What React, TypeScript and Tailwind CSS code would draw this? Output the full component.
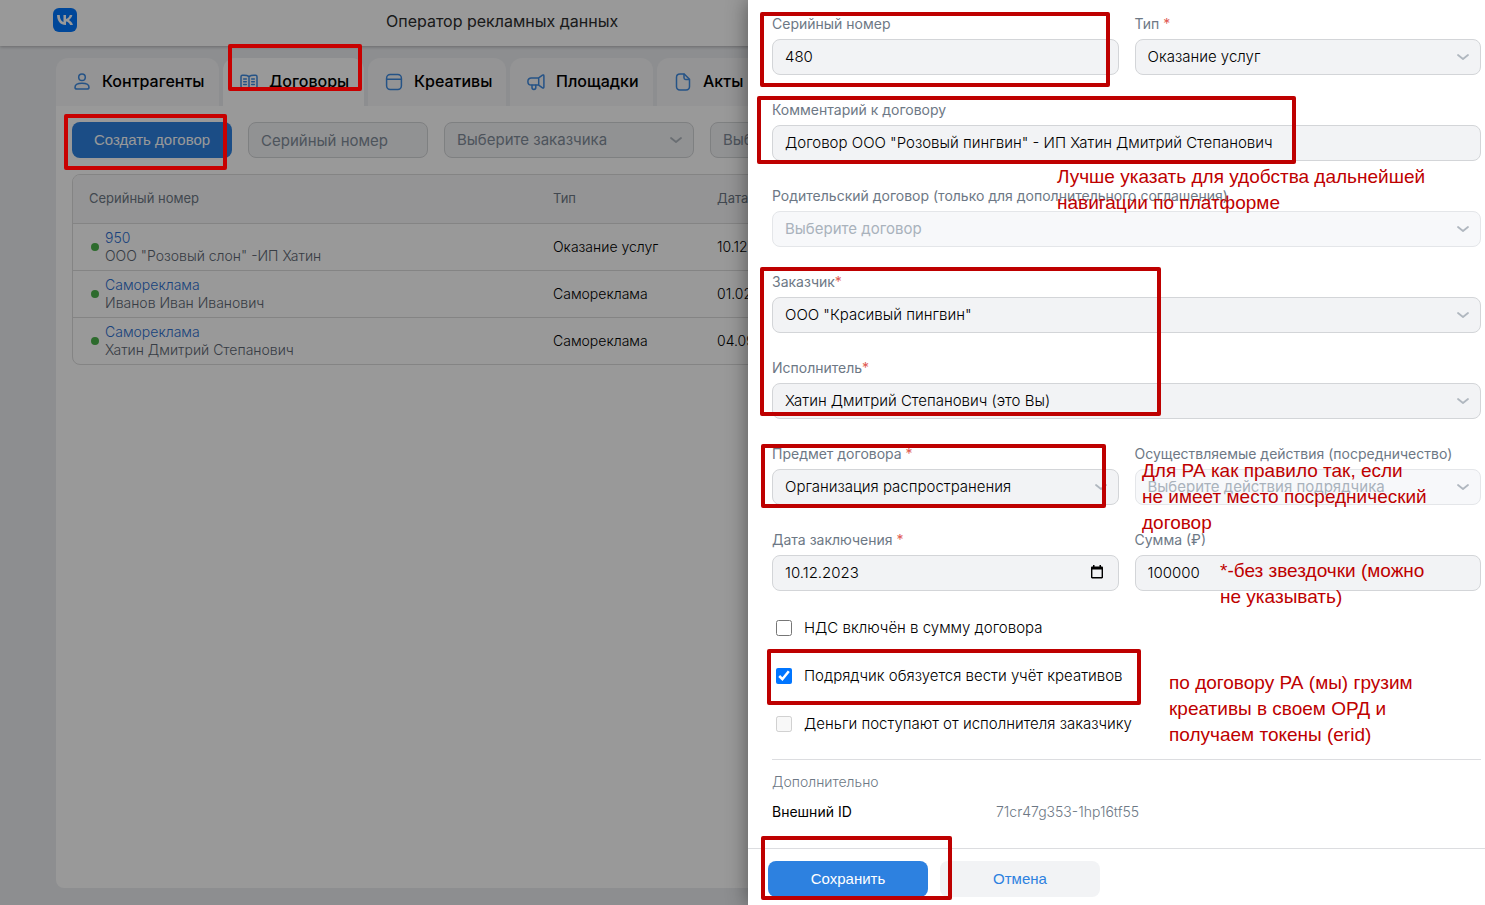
import { useId, useState } from 'react';
import type { ReactNode } from 'react';
import clsx from 'clsx';

type Tab = { label: string; icon: ReactNode; width: string; active?: boolean };
type Contract = { name: string; note: string; type: string; date: string };

const strokeProps = {
  viewBox: '0 0 20 20',
  fill: 'none',
  stroke: 'currentColor',
  strokeWidth: 1.5,
  strokeLinecap: 'round' as const,
  strokeLinejoin: 'round' as const,
  className: 'h-5 w-5 shrink-0 text-[#3f8ae0]',
  'aria-hidden': true,
};

const UserIcon = () => (
  <svg {...strokeProps}>
    <circle cx="10" cy="5.2" r="3.3" />
    <path d="M10 11.2c-4 0-7 1.6-7 4 0 1.2.7 1.9 1.9 1.9h10.2c1.2 0 1.9-.7 1.9-1.9 0-2.4-3-4-7-4Z" />
  </svg>
);

const BookIcon = () => (
  <svg {...strokeProps}>
    <path d="M10 4.6C8.8 3.7 7.3 3.3 5 3.3H3.4c-.9 0-1.4.5-1.4 1.4v9.8c0 .9.5 1.3 1.4 1.3H6c1.8 0 3 .4 4 1.3 1-.9 2.2-1.3 4-1.3h2.6c.9 0 1.4-.4 1.4-1.3V4.7c0-.9-.5-1.4-1.4-1.4H15c-2.3 0-3.8.4-5 1.3Zm0 0v12.2" />
    <path d="M4.7 6.9h2.6M4.7 9.7h2.6M4.7 12.5h2.6M12.7 6.9h2.6M12.7 9.7h2.6M12.7 12.5h2.6" />
  </svg>
);

const WindowIcon = () => (
  <svg {...strokeProps}>
    <rect x="2.6" y="2.6" width="14.8" height="14.8" rx="3.6" />
    <path d="M2.6 7.3h14.8" />
  </svg>
);

const MegaphoneIcon = () => (
  <svg {...strokeProps}>
    <path d="M12.7 5.9 16.5 3.2c.7-.5 1.4-.2 1.4.7v11.2c0 .9-.7 1.2-1.4.7l-3.8-2.7H5.2A3.3 3.3 0 0 1 1.9 9.8v-.6a3.3 3.3 0 0 1 3.3-3.3h7.5Zm0 0v7.2" />
    <path d="M6 13.2v2.4c0 1.2.8 1.9 1.9 1.9s1.9-.7 1.9-1.9v-2.4" />
  </svg>
);

const FileIcon = () => (
  <svg {...strokeProps}>
    <path d="M11.2 2H7C4.7 2 3.5 3.2 3.5 5.4v9.2C3.5 16.8 4.7 18 7 18h6c2.3 0 3.5-1.2 3.5-3.4V7.3L11.2 2Z" />
    <path d="M11 2.2v3.6c0 1 .6 1.6 1.6 1.6h3.7" />
  </svg>
);

const tabs: Tab[] = [
  { label: 'Контрагенты', icon: <UserIcon />, width: 'w-[163px]' },
  { label: 'Договоры', icon: <BookIcon />, width: 'w-[141px]', active: true },
  { label: 'Креативы', icon: <WindowIcon />, width: 'w-[138px]' },
  { label: 'Площадки', icon: <MegaphoneIcon />, width: 'w-[143px]' },
  { label: 'Акты', icon: <FileIcon />, width: 'w-[104px]' },
];

const contracts: Contract[] = [
  { name: '950', note: 'ООО "Розовый слон" -ИП Хатин', type: 'Оказание услуг', date: '10.12.2023' },
  { name: 'Самореклама', note: 'Иванов Иван Иванович', type: 'Самореклама', date: '01.02.2023' },
  { name: 'Самореклама', note: 'Хатин Дмитрий Степанович', type: 'Самореклама', date: '04.09.2023' },
];

const controlClass =
  'h-9 w-full appearance-none rounded-lg border px-3 text-[15px] outline-none placeholder:text-[#818c99]';
const enabledClass = 'border-[#d3d5d8] bg-[#f2f3f5]';
const disabledClass = 'border-[#e4e6e9] bg-[#f7f8fa] text-[#a9b2bc] opacity-100';

function Chevron() {
  return (
    <svg
      viewBox="0 0 14 8"
      fill="none"
      stroke="#b0b7bf"
      strokeWidth="1.8"
      strokeLinecap="round"
      strokeLinejoin="round"
      className="pointer-events-none absolute top-[14px] right-[11px] h-2 w-3.5"
      aria-hidden
    >
      <path d="M2 2l5 4L12 2" />
    </svg>
  );
}

type SelectProps = { id?: string; value: string; label?: string; placeholder?: boolean; disabled?: boolean };

function Select({ id, value, label, placeholder, disabled }: SelectProps) {
  return (
    <div className="relative">
      <select
        id={id}
        aria-label={label}
        disabled={disabled}
        className={clsx(
          controlClass,
          disabled ? disabledClass : enabledClass,
          !disabled && (placeholder ? 'text-[#818c99]' : 'font-light text-black'),
        )}
      >
        <option>{value}</option>
      </select>
      <Chevron />
    </div>
  );
}

type FieldProps = {
  label: string;
  mark?: string;
  value: string;
  kind?: 'text' | 'select' | 'date';
  wide?: boolean;
  disabled?: boolean;
};

function Field({ label, mark, value, kind = 'text', wide, disabled }: FieldProps) {
  const id = useId();
  const [text, setText] = useState(value);

  return (
    <div className={clsx('flex flex-col gap-[5px]', wide && 'col-span-2')}>
      <label htmlFor={id} className="text-sm leading-5 whitespace-nowrap text-[#6d7885]">
        {label}
        {mark && <span className="text-[#e05a52]">{mark}</span>}
      </label>
      {kind === 'select' ? (
        <Select id={id} value={value} disabled={disabled} />
      ) : (
        <div className="relative">
          <input
            id={id}
            value={text}
            onChange={(e) => setText(e.target.value)}
            className={clsx(controlClass, enabledClass, 'pb-0.5 font-light text-black')}
          />
          {kind === 'date' && (
            <button type="button" aria-label="Открыть календарь" className="absolute top-[10px] right-[15px]">
              <svg viewBox="0 0 14 14" className="h-3.5 w-3.5" aria-hidden>
                <path
                  fillRule="evenodd"
                  d="M3 0h1.5v1.5h5V0H11v1.5h.8c.7 0 1.2.5 1.2 1.2v9.6c0 .7-.5 1.2-1.2 1.2H2.2c-.7 0-1.2-.5-1.2-1.2V2.7c0-.7.5-1.2 1.2-1.2H3V0ZM2.4 4.5v7.6h9.2V4.5H2.4Z"
                />
              </svg>
            </button>
          )}
        </div>
      )}
    </div>
  );
}

function CheckRow({ label, checked: initial = false, disabled }: { label: string; checked?: boolean; disabled?: boolean }) {
  const [checked, setChecked] = useState(initial);
  return (
    <label className="flex h-12 items-center gap-3 pl-1 text-[15px] font-light">
      <input
        type="checkbox"
        checked={checked}
        disabled={disabled}
        onChange={(e) => setChecked(e.target.checked)}
        className="h-4 w-4 accent-[#0075ff]"
      />
      {label}
    </label>
  );
}

// Red frames and remarks of the walkthrough, drawn over the live page
function Frame({ className }: { className: string }) {
  return <div className={clsx('pointer-events-none absolute rounded-xs border-4', className)} />;
}

function Remark({ lines, className }: { lines: string[]; className: string }) {
  return (
    <p className={clsx("pointer-events-none absolute font-['Liberation_Sans',sans-serif] text-[19px] leading-[26px] whitespace-nowrap text-[#be0000]", className)}>
      {lines.map((line) => (
        <span key={line} className="block">{line}</span>
      ))}
    </p>
  );
}

function ContractsPage() {
  return (
    <div className="flex min-h-screen flex-col bg-[#ebedf0]">
      <header className="flex h-[46px] shrink-0 items-center bg-white pl-[53px] shadow-[0_1px_3px_rgba(0,0,0,0.25)]">
        <a href="#" aria-label="VK" className="mb-1.5 flex h-6 w-6 items-center justify-center rounded-md bg-[#0077ff]">
          <svg viewBox="4 7.3 16.1 10" className="w-4 fill-white" aria-hidden>
            <path d="M6.79 7.3H4.05c.13 6.24 3.25 9.99 8.72 9.99h.31v-3.57c2.01.2 3.53 1.67 4.14 3.57h2.84c-.78-2.84-2.83-4.41-4.11-5.01 1.28-.74 3.08-2.54 3.51-4.98h-2.58c-.56 1.98-2.22 3.78-3.8 3.95V7.3H10.5v6.92c-1.6-.4-3.62-2.34-3.71-6.92Z" />
          </svg>
        </a>
        <h1 className="mb-1 ml-[309px] text-base text-[#2c2d2e]">Оператор рекламных данных</h1>
      </header>

      <main className="mx-14 mt-3 mb-[17px] flex grow flex-col">
        <nav className="flex gap-1">
          {tabs.map(({ label, icon, width, active }) => (
            <a
              key={label}
              href="#"
              className={clsx('flex h-12 items-center gap-2.5 rounded-t-xl pl-4 font-medium text-black', width, active ? 'bg-white' : 'bg-[#f7f7f8]')}
            >
              {icon}
              <span className="pb-0.5">{label}</span>
            </a>
          ))}
        </nav>

        <section className="flex grow flex-col gap-4 rounded-b-lg bg-white p-4">
          <div className="flex gap-4">
            <button type="button" className="h-9 w-40 shrink-0 rounded-lg bg-[#2d81e0] font-['Liberation_Sans',sans-serif] text-[15px] text-white">
              Создать договор
            </button>
            <div className="w-[180px] shrink-0">
              <input aria-label="Серийный номер" placeholder="Серийный номер" className={clsx(controlClass, enabledClass)} />
            </div>
            <div className="w-[250px] shrink-0">
              <Select label="Заказчик" value="Выберите заказчика" placeholder />
            </div>
            <div className="w-[250px] shrink-0">
              <Select label="Исполнитель" value="Выберите исполнителя" placeholder />
            </div>
          </div>

          <div className="overflow-hidden rounded-lg border border-[#dcdcdd]">
            <table className="w-full table-fixed text-left text-sm">
              <thead className="bg-[#f7f7f8] text-[13px] text-[#6d7885]">
                <tr className="h-12">
                  <th className="w-[464px] pl-4 font-normal">Серийный номер</th>
                  <th className="w-[164px] pl-4 font-normal">Тип</th>
                  <th className="pl-4 font-normal">Дата</th>
                </tr>
              </thead>
              <tbody className="font-light">
                {contracts.map((c) => (
                  <tr key={c.note} className="h-[47px] border-t border-[#dcdcdd]">
                    <td className="pl-[18px]">
                      <div className="flex items-center gap-1.5">
                        <span className="h-2 w-2 rounded-full bg-[#4bb34b]" />
                        <div className="leading-[18px]">
                          <a href="#" className="block text-[#2d6fd0]">{c.name}</a>
                          <span className="block text-[#5c6672]">{c.note}</span>
                        </div>
                      </div>
                    </td>
                    <td className="pl-4">{c.type}</td>
                    <td className="pl-4">{c.date}</td>
                  </tr>
                ))}
              </tbody>
            </table>
          </div>
        </section>
      </main>
    </div>
  );
}

function ContractDrawer() {
  return (
    <aside className="absolute inset-y-0 right-0 flex w-[737px] flex-col bg-white shadow-[0_0_20px_rgba(0,0,0,0.45)]">
      <div className="grow overflow-hidden pt-[14px] pr-1 pl-6">
        <div className="grid grid-cols-2 gap-x-4 gap-y-[25px]">
          <Field label="Серийный номер" value="480" />
          <Field label="Тип" mark=" *" value="Оказание услуг" kind="select" />
          <Field label="Комментарий к договору" value={'Договор ООО "Розовый пингвин" - ИП Хатин Дмитрий Степанович'} wide />
          <Field label="Родительский договор (только для дополнительного соглашения)" value="Выберите договор" kind="select" wide disabled />
          <Field label="Заказчик" mark="*" value={'ООО "Красивый пингвин"'} kind="select" wide />
          <Field label="Исполнитель" mark="*" value="Хатин Дмитрий Степанович (это Вы)" kind="select" wide />
          <Field label="Предмет договора" mark=" *" value="Организация распространения" kind="select" />
          <Field label="Осуществляемые действия (посредничество)" value="Выберите действия подрядчика" kind="select" disabled />
          <Field label="Дата заключения" mark=" *" value="10.12.2023" kind="date" />
          <Field label="Сумма (₽)" value="100000" />
        </div>

        <div className="mt-[13px] border-b border-[#dcdde0] pb-[11px]">
          <CheckRow label="НДС включён в сумму договора" />
          <CheckRow label="Подрядчик обязуется вести учёт креативов" checked />
          <CheckRow label="Деньги поступают от исполнителя заказчику" disabled />
        </div>

        <h2 className="mt-3 text-sm leading-5 font-light text-[#6d7885]">Дополнительно</h2>
        <dl className="mt-2.5 flex text-sm leading-5">
          <dt className="w-56">Внешний ID</dt>
          <dd className="font-light text-[#6d7885]">71cr47g353-1hp16tf55</dd>
        </dl>
      </div>

      <footer className="flex shrink-0 gap-3 border-t border-[#dcdde0] px-5 pt-3 pb-2 font-['Liberation_Sans',sans-serif] text-[15px]">
        <button type="submit" className="h-9 w-40 rounded-lg bg-[#2d81e0] text-white">Сохранить</button>
        <button type="button" className="h-9 w-40 rounded-lg bg-[#f2f3f5] text-[#2d81e0]">Отмена</button>
      </footer>

      <Frame className="top-3 left-3 h-[75px] w-[350px] border-[#be0000]" />
      <Frame className="top-24 left-[9px] h-[68px] w-[539px] border-[#be0000]" />
      <Frame className="top-[267px] left-3 h-[149px] w-[401px] border-[#be0000]" />
      <Frame className="top-[444px] left-[13px] h-16 w-[345px] border-[#be0000]" />
      <Frame className="top-[649px] left-[19px] h-14 w-[374px] border-[#be0000]" />
      <Frame className="top-[836px] left-[13px] h-16 w-[191px] border-[#be0000]" />

      <Remark className="top-[164px] left-[309px]" lines={['Лучше указать для удобства дальнейшей', 'навигации по платформе']} />
      <Remark className="top-[458px] left-[394px]" lines={['Для РА как правило так, если', 'не имеет место посреднический', 'договор']} />
      <Remark className="top-[558px] left-[472px]" lines={['*-без звездочки (можно', 'не указывать)']} />
      <Remark className="top-[670px] left-[421px]" lines={['по договору РА (мы) грузим', 'креативы в своем ОРД и', 'получаем токены (erid)']} />
    </aside>
  );
}

export default function App() {
  return (
    <div className="relative overflow-hidden font-['Inter',sans-serif] text-black">
      <ContractsPage />
      <div className="absolute inset-0 bg-black/40" />
      <Frame className="top-11 left-[228px] h-[47px] w-[134px] border-[#c80000]" />
      <Frame className="top-[114px] left-16 h-14 w-[163px] border-[#c80000]" />
      <ContractDrawer />
    </div>
  );
}
